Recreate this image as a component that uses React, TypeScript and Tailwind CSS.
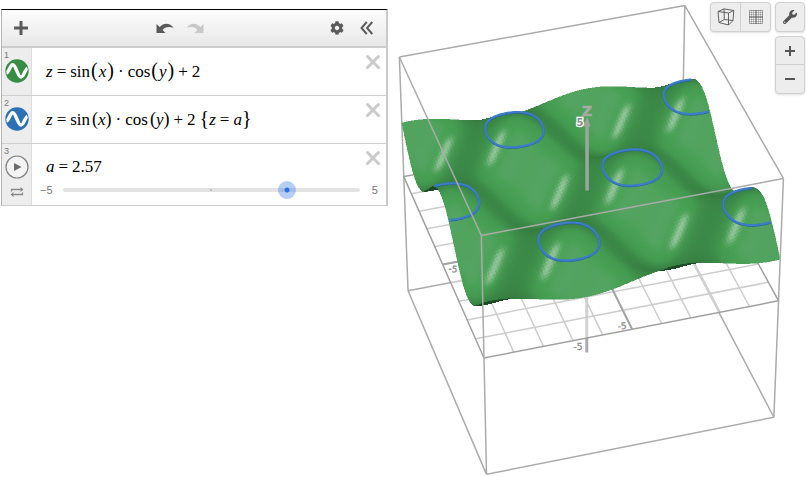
import clsx from "clsx";
import { ReactNode, useMemo, useState } from "react";
import { FaCog, FaWrench } from "react-icons/fa";

type Point = [number, number];
type Vec3 = [number, number, number];

const RANGE = 5;
const STEPS = 110;

// Projects graph coordinates (-5..5 on every axis) onto the drawing.
const project = (x: number, y: number, z: number): Point => {
  const u = x / RANGE;
  const v = -y / RANGE;
  const t = z / RANGE;
  const w = 1 + 0.006 * u - 0.0295 * v - 0.0243 * t;
  return [
    586.7 + (143.15 * u + 44.05 * v) / w,
    237.2 + (-27.15 * u + 89.2 * v - 118 * t) / w,
  ];
};

const surface = (x: number, y: number) => Math.sin(x) * Math.cos(y) + 2;

const toPath = (points: Point[]) =>
  points
    .map(([x, y], i) => `${i ? "L" : "M"}${x.toFixed(2)} ${y.toFixed(2)}`)
    .join("");

const RAMP: [number, Vec3][] = [
  [0.05, [48, 116, 58]],
  [0.35, [54, 127, 65]],
  [0.6, [60, 138, 72]],
  [0.8, [68, 154, 80]],
  [0.96, [72, 160, 85]],
  [1, [84, 164, 97]],
];

const LIGHT: Vec3 = [-0.05, -0.62, 0.78];
const GLOSS: Vec3 = [-0.45, -0.35, 0.82];

const dot = (a: Vec3, b: Vec3) => a[0] * b[0] + a[1] * b[1] + a[2] * b[2];

const shade = (x: number, y: number) => {
  const nx = -Math.cos(x) * Math.cos(y);
  const ny = Math.sin(x) * Math.sin(y);
  const len = Math.hypot(nx, ny, 1);
  const normal: Vec3 = [nx / len, ny / len, 1 / len];
  const d = Math.min(1, Math.max(0.05, dot(normal, LIGHT)));
  let i = 1;
  while (i < RAMP.length - 1 && RAMP[i][0] < d) i++;
  const [d0, c0] = RAMP[i - 1];
  const [d1, c1] = RAMP[i];
  const k = (d - d0) / (d1 - d0);
  const gloss = 0.47 * Math.pow(Math.max(0, dot(normal, GLOSS)), 120);
  const rgb = c0.map((c, j) => {
    const base = c + (c1[j] - c) * k;
    return Math.round(base + (255 - base) * gloss);
  });
  return `rgb(${rgb.join(",")})`;
};

const buildMesh = () => {
  const cells: { d: string; fill: string }[] = [];
  const size = (2 * RANGE) / STEPS;
  // Far cells come first so that near ones cover them.
  for (let j = STEPS - 1; j >= 0; j--) {
    for (let i = STEPS - 1; i >= 0; i--) {
      const x0 = -RANGE + i * size;
      const y0 = -RANGE + j * size;
      const x1 = x0 + size;
      const y1 = y0 + size;
      const p = [
        project(x0, y0, surface(x0, y0)),
        project(x1, y0, surface(x1, y0)),
        project(x1, y1, surface(x1, y1)),
        project(x0, y1, surface(x0, y1)),
      ];
      const area =
        (p[2][0] - p[0][0]) * (p[3][1] - p[1][1]) -
        (p[3][0] - p[1][0]) * (p[2][1] - p[0][1]);
      cells.push({
        d: toPath(p) + "Z",
        fill: area > 0 ? "#1b4a25" : shade(x0 + size / 2, y0 + size / 2),
      });
    }
  }
  return cells;
};

// Closed curves around each peak (or dip) where the surface has height a.
const buildContours = (a: number) => {
  const level = a - 2;
  if (Math.abs(level) >= 1 || level === 0) return "";
  let d = "";
  for (let k = -2; k <= 1; k++) {
    for (let m = -1; m <= 1; m++) {
      const cx = Math.PI * (k + 0.5);
      const cy = Math.PI * m;
      if (Math.sin(cx) * Math.cos(cy) * level < 0) continue;
      let run: Point[] = [];
      for (let s = 0; s <= 120; s++) {
        const angle = (s / 120) * Math.PI * 2;
        let lo = 0;
        let hi = Math.PI / 2;
        for (let n = 0; n < 24; n++) {
          const r = (lo + hi) / 2;
          const h = Math.cos(r * Math.cos(angle)) * Math.cos(r * Math.sin(angle));
          if (h > Math.abs(level)) lo = r;
          else hi = r;
        }
        const x = cx + lo * Math.cos(angle);
        const y = cy + lo * Math.sin(angle);
        if (Math.abs(x) <= RANGE && Math.abs(y) <= RANGE) {
          run.push(project(x, y, a));
        } else {
          d += toPath(run);
          run = [];
        }
      }
      d += toPath(run);
    }
  }
  return d;
};

const segment = (a: Vec3, b: Vec3) => toPath([project(...a), project(...b)]);

const gridLines = Array.from({ length: 9 }, (_, i) => i - 4)
  .map(
    (n) => segment([n, -5, 0], [n, 5, 0]) + segment([-5, n, 0], [5, n, 0])
  )
  .join("");

const planeEdge =
  toPath([
    project(-5, 5, 0),
    project(-5, -5, 0),
    project(5, -5, 0),
    project(5, 5, 0),
  ]) + "Z";

const backBox =
  segment([-5, 5, 5], [5, 5, 5]) +
  segment([5, 5, 5], [5, -5, 5]) +
  segment([5, 5, 5], [5, 5, -5]) +
  segment([-5, 5, 5], [-5, 5, -5]) +
  segment([-5, 5, -5], [5, 5, -5]) +
  segment([5, 5, -5], [5, -5, -5]);

const frontBox =
  segment([-5, 5, 5], [-5, -5, 5]) +
  segment([-5, -5, 5], [5, -5, 5]) +
  segment([-5, -5, 5], [-5, -5, -5]) +
  segment([5, -5, 5], [5, -5, -5]) +
  segment([-5, 5, -5], [-5, -5, -5]) +
  segment([-5, -5, -5], [5, -5, -5]);

const Graph = ({ a }: { a: number }) => {
  const mesh = useMemo(buildMesh, []);
  const contours = useMemo(() => buildContours(a), [a]);

  return (
    <svg
      viewBox="388 0 418 477"
      className="block w-full"
      role="img"
      aria-label="3D graph"
      fill="none"
    >
      <path d={backBox} stroke="#ababab" strokeWidth="1.5" />
      <path d={segment([0, 0, 0], [0, 0, -5])} stroke="#ababab" strokeWidth="3" />
      <path d={planeEdge} fill="#fff" fillOpacity="0.45" />
      <path d={gridLines} stroke="#cdcdcd" strokeWidth="1.5" />
      <path d={planeEdge} stroke="#a0a0a0" strokeWidth="1.5" />
      <path
        d={segment([0, -5, 0], [0, 5, 0]) + segment([-5, 0, 0], [5, 0, 0])}
        stroke="#a3a3a3"
        strokeWidth="2"
      />
      <g shapeRendering="crispEdges" strokeWidth="0.5">
        {mesh.map((cell, i) => (
          <path key={i} d={cell.d} fill={cell.fill} stroke={cell.fill} />
        ))}
      </g>
      <path d={contours} stroke="#2b6398" strokeWidth="2.2" transform="translate(0 0.6)" />
      <path d={contours} stroke="#3c7ccb" strokeWidth="2.1" />
      <path d={frontBox} stroke="#ababab" strokeWidth="1.5" />
      <path d="M587 124V190.500" stroke="#9ea79f" strokeWidth="3.5" />
      <path d="M587 117L590.500 126.500H583.500Z" fill="#9ea79f" />
      <g
        className="font-['DejaVu_Sans']"
        fill="#8a8a8a"
        stroke="#8a8a8a"
        strokeWidth="0.300"
        textAnchor="middle"
        fontSize="9"
      >
        <text
          x="587"
          y="116"
          fontSize="14"
          fill="#a5aaa5"
          stroke="#a5aaa5"
          strokeWidth="0.600"
          className="font-bold"
        >
          Z
        </text>
        <text
          x="580"
          y="126"
          fontSize="10"
          stroke="#fff"
          strokeWidth="2.500"
          paintOrder="stroke"
          className="font-bold"
        >
          5
        </text>
        <text x="578" y="350">
          -5
        </text>
        <text x="622" y="329" transform="rotate(-6 622 326)">
          -5
        </text>
        <text x="453" y="272" transform="rotate(6 453 269)">
          -5
        </text>
      </g>
    </svg>
  );
};

const WaveBadge = ({ className }: { className: string }) => (
  <svg viewBox="0 0 24 24" className={clsx("size-6", className)}>
    <circle cx="12" cy="12" r="11.7" fill="currentColor" />
    <path
      d="M1.500 14C4 13.500 5 5.800 7.800 5.800C11 5.800 12.500 18 16 18C19 18 19.500 10.500 22.500 9.500"
      fill="none"
      stroke="#fff"
      strokeWidth="3.400"
    />
  </svg>
);

const Undo = ({ className }: { className?: string }) => (
  <svg viewBox="0 0 18 11" className={clsx("h-[11px] w-[18px]", className)}>
    <path
      d="M0.500 1V10H9.500L6.600 7C8.500 4.300 12.500 2.800 17.500 4.800C14 -0.400 7.500 -0.600 3.700 4.100Z"
      fill="currentColor"
    />
  </svg>
);

const Row = ({
  index,
  icon,
  children,
}: {
  index: number;
  icon: ReactNode;
  children: ReactNode;
}) => (
  <li className="flex border-b border-[#cfcfcf]">
    <div className="flex w-[30px] shrink-0 flex-col border-r border-[#dcdcdc] bg-[#ededed] pt-1">
      <span className="pl-0.5 font-['Liberation_Sans'] text-[9px] leading-[7px] text-[#777]">
        {index}
      </span>
      <div className="flex flex-col items-center">{icon}</div>
    </div>
    <div className="min-w-0 flex-1">{children}</div>
  </li>
);

const Expression = ({ children }: { children: ReactNode }) => (
  <div className="flex justify-between">
    <div className="flex h-[46px] items-center pl-3.5 font-['Liberation_Serif'] text-[17px] whitespace-nowrap text-black">
      <p className="leading-5">{children}</p>
    </div>
    <button
      type="button"
      aria-label="Delete expression"
      className="self-start px-[5px] py-1.5"
    >
      <svg viewBox="0 0 16 16" className="size-4">
        <path
          d="M2.500 2.500L13.500 13.500M13.500 2.500L2.500 13.500"
          stroke="#cbcbcb"
          strokeWidth="3"
          strokeLinecap="round"
        />
      </svg>
    </button>
  </div>
);

const Op = ({ children }: { children: ReactNode }) => (
  <span className="mx-1">{children}</span>
);

const Paren = ({ children, wide }: { children: string; wide?: boolean }) => (
  <span className={wide ? "ml-px" : "ml-0.5"}>
    <span className={wide ? "text-xl leading-5" : "text-lg leading-5"}>(</span>
    <i className={wide ? "mx-px" : ""}>{children}</i>
    <span className={wide ? "text-xl leading-5" : "text-lg leading-5"}>)</span>
  </span>
);

const toolButton = "flex h-7 items-center justify-center text-[#555]";
const toolGroup =
  "rounded border border-[#d0d0d0] bg-[#ededed] shadow-sm divide-[#d0d0d0]";

const App = () => {
  const [a, setA] = useState(2.57);

  return (
    <main className="flex min-h-screen items-start bg-white">
      <section className="mt-[9px] ml-px w-[48%] shrink-0 border-t border-r-2 border-l border-t-black border-r-[#cacaca] border-l-[#b5b5b5]">
        <header className="flex h-[38px] items-center border-b-2 border-[#cccccc] bg-linear-to-b from-[#fcfcfc] to-[#e8e8e8] px-3 text-[#5a5a5a]">
          <div className="flex flex-1">
            <button type="button" aria-label="Add item">
              <svg viewBox="0 0 14 14" className="size-3.5">
                <path d="M7 0V14M0 7H14" stroke="currentColor" strokeWidth="3" />
              </svg>
            </button>
          </div>
          <div className="mr-7 flex gap-3">
            <button type="button" aria-label="Undo">
              <Undo />
            </button>
            <button type="button" aria-label="Redo" disabled>
              <Undo className="-scale-x-100 text-[#c8c8c8]" />
            </button>
          </div>
          <div className="flex flex-1 items-center justify-end gap-4">
            <button type="button" aria-label="Settings">
              <FaCog className="size-3.5" />
            </button>
            <button type="button" aria-label="Hide list">
              <svg viewBox="0 0 14 14" className="size-3.5">
                <path
                  d="M6.800 1L1.500 7L6.800 13M12.300 1L7 7L12.300 13"
                  fill="none"
                  stroke="currentColor"
                  strokeWidth="1.900"
                />
              </svg>
            </button>
          </div>
        </header>

        <ul>
          <Row index={1} icon={<WaveBadge className="mb-3 text-[#388c46]" />}>
            <Expression>
              <i>z</i>
              <Op>=</Op>
              sin
              <Paren wide>x</Paren>
              <Op>·</Op>
              cos
              <Paren wide>y</Paren>
              <Op>+</Op>2
            </Expression>
          </Row>
          <Row index={2} icon={<WaveBadge className="mb-3 text-[#2d70b3]" />}>
            <Expression>
              <i>z</i>
              <Op>=</Op>
              sin
              <Paren>x</Paren>
              <Op>·</Op>
              cos
              <Paren>y</Paren>
              <Op>+</Op>2<span className="ml-1 text-xl leading-5">{"{"}</span>
              <i>z</i>
              <Op>=</Op>
              <i>a</i>
              <span className="text-xl leading-5">{"}"}</span>
            </Expression>
          </Row>
          <Row
            index={3}
            icon={
              <>
                <button type="button" aria-label="Play slider">
                  <svg viewBox="0 0 24 24" className="size-6">
                    <circle
                      cx="12"
                      cy="12"
                      r="11"
                      fill="#f4f4f4"
                      stroke="#808080"
                      strokeWidth="1.200"
                    />
                    <path d="M9 8L16.500 12L9 16Z" fill="#6b6b6b" />
                  </svg>
                </button>
                <button type="button" aria-label="Loop mode" className="mt-2">
                  <svg viewBox="0 0 14 10" className="h-2.5 w-3.5">
                    <path
                      d="M1.500 4.500V2.500H11.500M12.500 5.500V7.500H2.500"
                      fill="none"
                      stroke="#8a8a8a"
                      strokeWidth="1.300"
                    />
                    <path
                      d="M10.500 0L13.500 2.500L10.500 5ZM3.500 5L0.500 7.500L3.500 10Z"
                      fill="#8a8a8a"
                    />
                  </svg>
                </button>
              </>
            }
          >
            <Expression>
              <i>a</i>
              <Op>=</Op>
              {a.toFixed(2)}
            </Expression>
            <div className="-mt-2 flex items-center pr-2 pb-[7px] pl-2 font-['Liberation_Sans'] text-[11px] leading-4 text-[#777]">
              <span>−5</span>
              <div className="mr-1 ml-0.5 grid min-w-0 flex-1 items-center">
                <div className="col-start-1 row-start-1 mx-2 flex h-1 items-center justify-center rounded-full bg-[#e3e3e3]">
                  <span className="size-0.5 rounded-full bg-[#b0b0b0]" />
                </div>
                <input
                  type="range"
                  aria-label="a"
                  min={-5}
                  max={5}
                  step={0.01}
                  value={a}
                  onChange={(evt) => setA(Number(evt.target.value))}
                  className="col-start-1 row-start-1 h-4 w-full appearance-none bg-transparent [&::-webkit-slider-thumb]:size-[18px] [&::-webkit-slider-thumb]:appearance-none [&::-webkit-slider-thumb]:rounded-full [&::-webkit-slider-thumb]:bg-[radial-gradient(circle,#2d70e6_2px,#3b7be45f_3px)]"
                />
              </div>
              <span>5</span>
            </div>
          </Row>
        </ul>
      </section>

      <section className="relative min-w-0 flex-1">
        <Graph a={a} />
        <div className="absolute top-0.5 right-px flex items-start gap-1">
          <div className={clsx(toolGroup, "flex divide-x")}>
            <button
              type="button"
              aria-label="3D view"
              className={clsx(toolButton, "w-[30px]")}
            >
              <svg
                viewBox="0 0 18 18"
                className="size-[18px]"
                fill="none"
                stroke="currentColor"
                strokeWidth="0.900"
              >
                <path d="M1 3.500L11.500 5L16.800 2.500L7 0.900ZM1 3.500L2 14.500L11.500 17L16 12.500L16.800 2.500M11.500 5V17M7 0.900L7.300 11.500L2 14.500M7.300 11.500L16 12.500" />
              </svg>
            </button>
            <button
              type="button"
              aria-label="Grid view"
              className={clsx(toolButton, "w-[29px]")}
            >
              <svg viewBox="0 0 16 16" className="size-4" fill="none" stroke="currentColor">
                <path
                  d="M3.500 1V15M5.500 1V15M10.500 1V15M12.500 1V15M1 3.500H15M1 5.500H15M1 10.500H15M1 12.500H15"
                  strokeWidth="0.300"
                />
                <path d="M1.500 1.500H14.500V14.500H1.500Z" strokeWidth="0.500" />
                <path d="M8 1V15M1 8H15" strokeWidth="1" />
              </svg>
            </button>
          </div>
          <div className="flex flex-col gap-1">
            <div className={toolGroup}>
              <button
                type="button"
                aria-label="Graph settings"
                className={clsx(toolButton, "w-7")}
              >
                <FaWrench className="size-3.5" />
              </button>
            </div>
            <div className={clsx(toolGroup, "divide-y")}>
              <button
                type="button"
                aria-label="Zoom in"
                className={clsx(toolButton, "w-7")}
              >
                <svg viewBox="0 0 10 10" className="size-2.5">
                  <path d="M5 0V10M0 5H10" stroke="currentColor" strokeWidth="2" />
                </svg>
              </button>
              <button
                type="button"
                aria-label="Zoom out"
                className={clsx(toolButton, "w-7")}
              >
                <svg viewBox="0 0 10 10" className="size-2.5">
                  <path d="M0 5H10" stroke="currentColor" strokeWidth="2" />
                </svg>
              </button>
            </div>
          </div>
        </div>
      </section>
    </main>
  );
};

export default App;
